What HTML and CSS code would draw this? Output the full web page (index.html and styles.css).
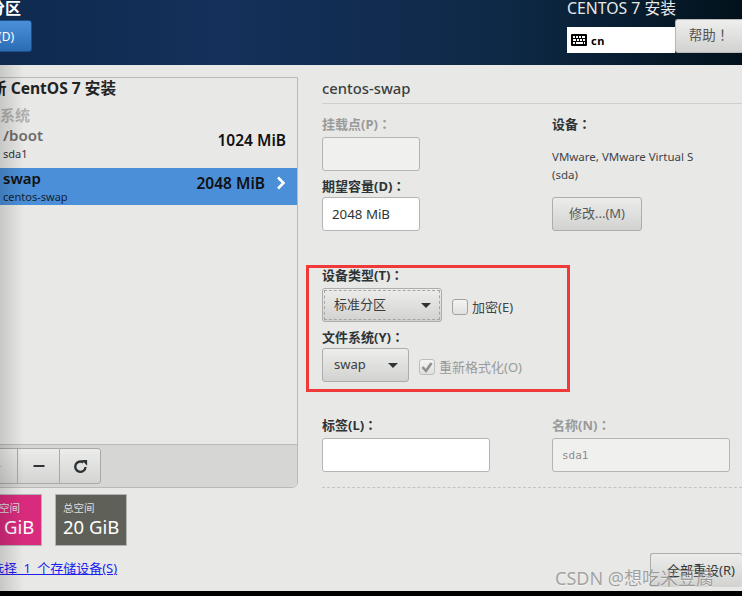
FILE: index.html
```html
<!DOCTYPE html>
<html lang="zh-CN">
<head>
  <meta charset="UTF-8" />
  <title>手动分区</title>
  <link rel="stylesheet" href="styles.css">
</head>
<body>

  <header class="topbar">
    <div class="topbar-left">
      <div class="page-title">手动分区</div>
      <button class="done">完成(D)</button>
    </div>
    <div class="topbar-right">
      <div class="product">CENTOS 7 安装</div>
      <div class="topbar-row">
        <div class="keyboard">
          <svg class="kbd-icon" viewBox="0 0 16 12" width="16" height="12">
            <path fill="#000" fill-rule="evenodd" d="M1 0h14a1 1 0 0 1 1 1v10a1 1 0 0 1-1 1H1a1 1 0 0 1-1-1V1a1 1 0 0 1 1-1zM2 2v2h2V2zm3 0v2h2V2zm3 0v2h2V2zm3 0v2h3V2zM2 5v2h3V5zm4 0v2h2V5zm3 0v2h2V5zm3 0v2h2V5zM2 8v2h2V8zm3 0v2h7V8zm8 0v2h1V8z"/>
          </svg>
          <span>cn</span>
        </div>
        <button class="help">帮助<span class="colon" lang="zh-TW">！</span></button>
      </div>
    </div>
  </header>

  <main class="content">
    <section class="left">
      <div class="panel">
        <div class="panel-body">
          <h2 class="panel-title">新 CentOS 7 安装</h2>
          <div class="group">系统</div>
          <div class="mount">
            <div class="mount-text">
              <div class="mount-name muted">/boot</div>
              <div class="mount-dev">sda1</div>
            </div>
            <div class="mount-size">1024 MiB</div>
          </div>
          <div class="mount selected">
            <div class="mount-text">
              <div class="mount-name">swap</div>
              <div class="mount-dev">centos-swap</div>
            </div>
            <div class="mount-size">2048 MiB</div>
            <svg class="chevron" viewBox="0 0 10 14" width="10" height="14">
              <path d="M2 1.5 7.5 7 2 12.5" fill="none" stroke="#fff" stroke-width="2.6"/>
            </svg>
          </div>
        </div>
        <div class="toolbar">
          <div class="tool-group">
            <button class="tool">+</button>
            <button class="tool">
              <svg viewBox="0 0 12 12" width="12" height="12"><path d="M0.5 6h11" stroke="#2e3436" stroke-width="2"/></svg>
            </button>
            <button class="tool">
              <svg viewBox="0 0 14 14" width="15" height="15">
                <path d="M11.7 7.5A4.8 4.8 0 1 1 9.6 3.2" fill="none" stroke="#2e3436" stroke-width="2.2"/>
                <path d="M8 1h5.2v5.2z" fill="#2e3436"/>
              </svg>
            </button>
          </div>
        </div>
      </div>

      <div class="tiles">
        <div class="tile pink">
          <div class="tile-label">可用空间</div>
          <div class="tile-value">17 GiB</div>
        </div>
        <div class="tile grey">
          <div class="tile-label">总空间</div>
          <div class="tile-value">20 GiB</div>
        </div>
      </div>
      <a class="storage-link" href="#">已选择 1 个存储设备(S)</a>
    </section>

    <section class="right">
      <h3 class="right-title">centos-swap</h3>

      <div class="cols top-cols">
        <div class="col-a">
          <label class="field-label off">挂载点(P)<span class="colon" lang="zh-TW">：</span></label>
          <input class="input w98 disabled" type="text" disabled />
          <label class="field-label second">期望容量(D)<span class="colon" lang="zh-TW">：</span></label>
          <input class="input w98" type="text" value="2048 MiB" />
        </div>
        <div class="col-b">
          <div class="field-label">设备<span class="colon" lang="zh-TW">：</span></div>
          <p class="device">VMware, VMware Virtual S<br>(sda)</p>
          <button class="btn modify">修改...(M)</button>
        </div>
      </div>

      <div class="red-box">
        <label class="field-label">设备类型(T)<span class="colon" lang="zh-TW">：</span></label>
        <div class="inline">
          <div class="combo w120 focused">标准分区<i class="caret"></i></div>
          <label class="check"><span class="box"></span>加密(E)</label>
        </div>
        <label class="field-label second">文件系统(Y)<span class="colon" lang="zh-TW">：</span></label>
        <div class="inline">
          <div class="combo w87">swap<i class="caret"></i></div>
          <label class="check off">
            <span class="box">
              <svg viewBox="0 0 14 14" width="14" height="14"><path d="M2.5 7 6 11 11.5 3" fill="none" stroke="#8f8f8f" stroke-width="2.6"/></svg>
            </span>重新格式化(O)
          </label>
        </div>
      </div>

      <div class="cols bottom-cols">
        <div class="col-a">
          <label class="field-label">标签(L)<span class="colon" lang="zh-TW">：</span></label>
          <input class="input w168" type="text" />
        </div>
        <div class="col-b">
          <label class="field-label off">名称(N)<span class="colon" lang="zh-TW">：</span></label>
          <input class="input w178 disabled mono" type="text" value="sda1" disabled />
        </div>
      </div>

      <div class="dashes"></div>
      <div class="actions">
        <button class="btn reset">全部重设(R)</button>
      </div>
    </section>
  </main>

  <div class="bottom-strip"></div>

  <div class="edge-shade"></div>
  <div class="watermark">CSDN @想吃米豆腐</div>

</body>
</html>
```

FILE: styles.css
```css
* {
  box-sizing: border-box;
}
html, body {
  margin: 0;
  height: 596px;
  overflow: hidden;
}
body {
  position: relative;
  font-family: "Noto Sans", "Noto Sans CJK SC", sans-serif;
  font-size: 13px;
  color: #2e3436;
  background: #e8e8e7;
}
button {
  font-family: inherit;
  cursor: pointer;
}
.colon {
  font-family: "Noto Sans CJK TC", sans-serif;
}

/* header */
.topbar {
  height: 65px;
  display: flex;
  justify-content: space-between;
  background: linear-gradient(90deg, #0f2a4e 0%, #15305a 30%, #0e2946 68%, #02121c 100%);
  color: #fff;
  overflow: hidden;
}
.topbar-left {
  margin-left: -58px;
}
.page-title {
  height: 20px;
  margin-top: -2px;
  padding-left: 15px;
  font-size: 16px;
  line-height: 20px;
  font-weight: bold;
}
.done {
  display: block;
  width: 90px;
  height: 32px;
  margin-top: 2px;
  padding: 0 17px 0 0;
  text-align: right;
  color: #fff;
  font-size: 12px;
  background: linear-gradient(#4a90d9, #2a6db5);
  border: 1px solid #1e4f88;
  border-radius: 3px;
}
.topbar-right {
  width: 175px;
}
.product {
  height: 19px;
  font-size: 15.8px;
  line-height: 17px;
  white-space: nowrap;
  color: #e8e8e8;
}
.topbar-row {
  display: flex;
  align-items: flex-start;
}
.keyboard {
  display: flex;
  align-items: center;
  gap: 4px;
  width: 108px;
  height: 26px;
  margin-top: 8px;
  padding-left: 4px;
  background: #fff;
  color: #000;
  font-size: 11px;
  font-weight: bold;
  letter-spacing: 0.5px;
}
.help {
  width: 67px;
  height: 34px;
  padding: 0 0 5px;
  border: 1px solid #b8b8b6;
  border-right: 0;
  border-radius: 3px 0 0 3px;
  color: #555;
  font-size: 13.5px;
  background: linear-gradient(#eeeeec, #d2d2d0);
}

/* main area */
.content {
  height: 526px;
  display: flex;
}
.left {
  width: 298px;
  flex: none;
  padding-top: 12px;
}
.panel {
  height: 411px;
  margin-left: -30px;
  display: flex;
  flex-direction: column;
  background: #e8e8e7;
  border: 1px solid #b9b9b7;
  border-radius: 0 0 6px 0;
}
.panel-body {
  flex: 1;
}
.panel-title {
  margin: 0;
  padding-left: 20px;
  font-size: 15.6px;
  line-height: 20px;
  color: #1f2324;
}
.group {
  margin-top: 8px;
  padding-left: 29px;
  height: 19px;
  font-size: 15px;
  line-height: 19px;
  font-weight: bold;
  color: #b0b0ae;
}
.mount {
  height: 43px;
  padding: 1px 11px 0 32px;
  display: flex;
  align-items: flex-start;
  justify-content: space-between;
}
.mount-text {
  line-height: 18px;
}
.mount-name {
  font-size: 15px;
  font-weight: 600;
}
.muted {
  color: #6c6c6a;
}
.mount-dev {
  margin-top: 1px;
  font-size: 11px;
  color: #2e3436;
}
.mount-size {
  margin-top: 5px;
  font-size: 15.5px;
  line-height: 18px;
  font-weight: 600;
  color: #111;
}
.selected {
  height: 37px;
  background: #4a8fd8;
  color: #111;
}
.selected .mount-size {
  margin-left: auto;
  margin-right: 11px;
}
.selected .mount-dev {
  color: #16222e;
}
.chevron {
  margin-top: 7px;
}
.toolbar {
  height: 43px;
  padding-top: 3px;
  background: #d6d6d5;
  border-top: 1px solid #b9b9b7;
  border-radius: 0 0 6px 0;
}
.tool-group {
  display: flex;
  margin-left: 4px;
}
.tool {
  width: 42px;
  height: 36px;
  padding: 0;
  display: flex;
  align-items: center;
  justify-content: center;
  font-size: 15px;
  background: linear-gradient(#ececeb, #d4d4d2);
  border: 1px solid #a9a9a7;
  border-right-width: 0;
}
.tool:last-child {
  border-right-width: 1px;
  border-radius: 0 3px 3px 0;
}
.tiles {
  display: flex;
  gap: 13px;
  margin: 6px 0 0 -30px;
}
.tile {
  width: 72px;
  height: 52px;
  padding: 6px 0 0 7px;
  color: #fff;
  border: 1px solid #b3b3b1;
  white-space: nowrap;
}
.tile.pink {
  background: #d92b7e;
}
.tile.grey {
  background: #5f6058;
}
.tile-label {
  font-size: 10.5px;
  line-height: 14px;
  color: #dedede;
}
.tile-value {
  font-size: 18.5px;
  line-height: 24px;
}
.storage-link {
  display: block;
  margin: 13px 0 0 -22px;
  font-size: 13px;
  line-height: 18px;
  word-spacing: 3px;
  color: #1f1fee;
  white-space: nowrap;
}

/* right side */
.right {
  flex: 1;
  padding: 14px 0 0 24px;
  min-width: 0;
}
.right-title {
  margin: 0;
  height: 25px;
  font-size: 14.8px;
  line-height: 19px;
  font-weight: 500;
  color: #3a3f41;
  border-bottom: 1px solid #cfcfcd;
}
.cols {
  display: flex;
}
.col-a {
  width: 230px;
  flex: none;
}
.top-cols {
  margin-top: 13px;
}
.field-label {
  display: block;
  height: 20px;
  font-size: 13px;
  line-height: 14px;
  font-weight: bold;
  color: #2e3436;
}
.field-label.off {
  color: #9a9a98;
}
.field-label.second {
  height: 26px;
  padding-top: 6px;
  line-height: 17px;
}
.input {
  display: block;
  height: 34px;
  padding: 0 9px;
  font-family: inherit;
  font-size: 13.3px;
  color: #2e3436;
  background: #fff;
  border: 1px solid #b4b4b2;
  border-radius: 3px;
}
.disabled {
  background: #f0f0ef;
  color: #8e8e8c;
}
.mono {
  font-family: "DejaVu Sans Mono", monospace;
  font-size: 11px;
}
.w98 { width: 98px; }
.w168 { width: 168px; }
.w178 { width: 178px; }
.device {
  margin: 11px 0 13px;
  font-size: 11.5px;
  line-height: 18px;
  color: #3f4446;
  white-space: nowrap;
}
.btn {
  height: 34px;
  padding: 0 0 3px;
  font-size: 13px;
  color: #555a5c;
  background: linear-gradient(#ececeb, #d2d2d0);
  border: 1px solid #adadab;
  border-radius: 3px;
}
.modify {
  width: 90px;
}
.red-box {
  width: 264px;
  height: 127px;
  margin: 34px 0 0 -16px;
  padding: 0 0 0 13px;
  border: 3px solid #f03a3a;
}
.inline {
  display: flex;
  align-items: center;
  gap: 10px;
}
.combo {
  position: relative;
  height: 34px;
  padding-left: 11px;
  line-height: 30px;
  font-size: 13px;
  color: #3a3f41;
  background: linear-gradient(#ededec, #d2d2d0);
  border: 1px solid #adadab;
  border-radius: 3px;
}
.focused {
  outline: 1px dashed #a5a5a3;
  outline-offset: -3px;
}
.w120 { width: 120px; }
.w87 { width: 87px; }
.caret {
  position: absolute;
  right: 10px;
  top: 14px;
  border-left: 5px solid transparent;
  border-right: 5px solid transparent;
  border-top: 5px solid #2e3436;
}
.check {
  display: flex;
  align-items: center;
  gap: 4px;
  margin-top: 3px;
  font-size: 13px;
  color: #3f4446;
}
.check.off {
  color: #9a9a98;
}
.box {
  width: 16px;
  height: 16px;
  display: flex;
  align-items: center;
  justify-content: center;
  background: linear-gradient(#f4f4f3, #e0e0de);
  border: 1px solid #a3a3a1;
  border-radius: 3px;
}
.off .box {
  border-color: #bdbdbb;
}
.bottom-cols {
  margin-top: 26px;
}
.dashes {
  margin-top: 15px;
  border-top: 1px dashed #c4c4c2;
}
.actions {
  display: flex;
  justify-content: flex-end;
  margin-top: 65px;
}
.reset {
  width: 92px;
  height: 34px;
  padding: 0 0 3px 16px;
  text-align: left;
  white-space: nowrap;
  color: #33383a;
  border-right: 0;
  border-bottom: 0;
}

.bottom-strip {
  position: absolute;
  left: 0;
  right: 0;
  bottom: 0;
  height: 5px;
  background: #000;
}

/* overlays */
.edge-shade {
  position: absolute;
  left: 0;
  top: 65px;
  bottom: 5px;
  width: 24px;
  background: linear-gradient(90deg, rgba(0, 0, 0, 0.14), rgba(0, 0, 0, 0));
  pointer-events: none;
}
.watermark {
  position: absolute;
  left: 555px;
  top: 566px;
  font-size: 18px;
  line-height: 24px;
  white-space: nowrap;
  color: rgba(110, 110, 110, 0.6);
  text-shadow: 0 1px 0 rgba(255, 255, 255, 0.5);
  pointer-events: none;
}
```
